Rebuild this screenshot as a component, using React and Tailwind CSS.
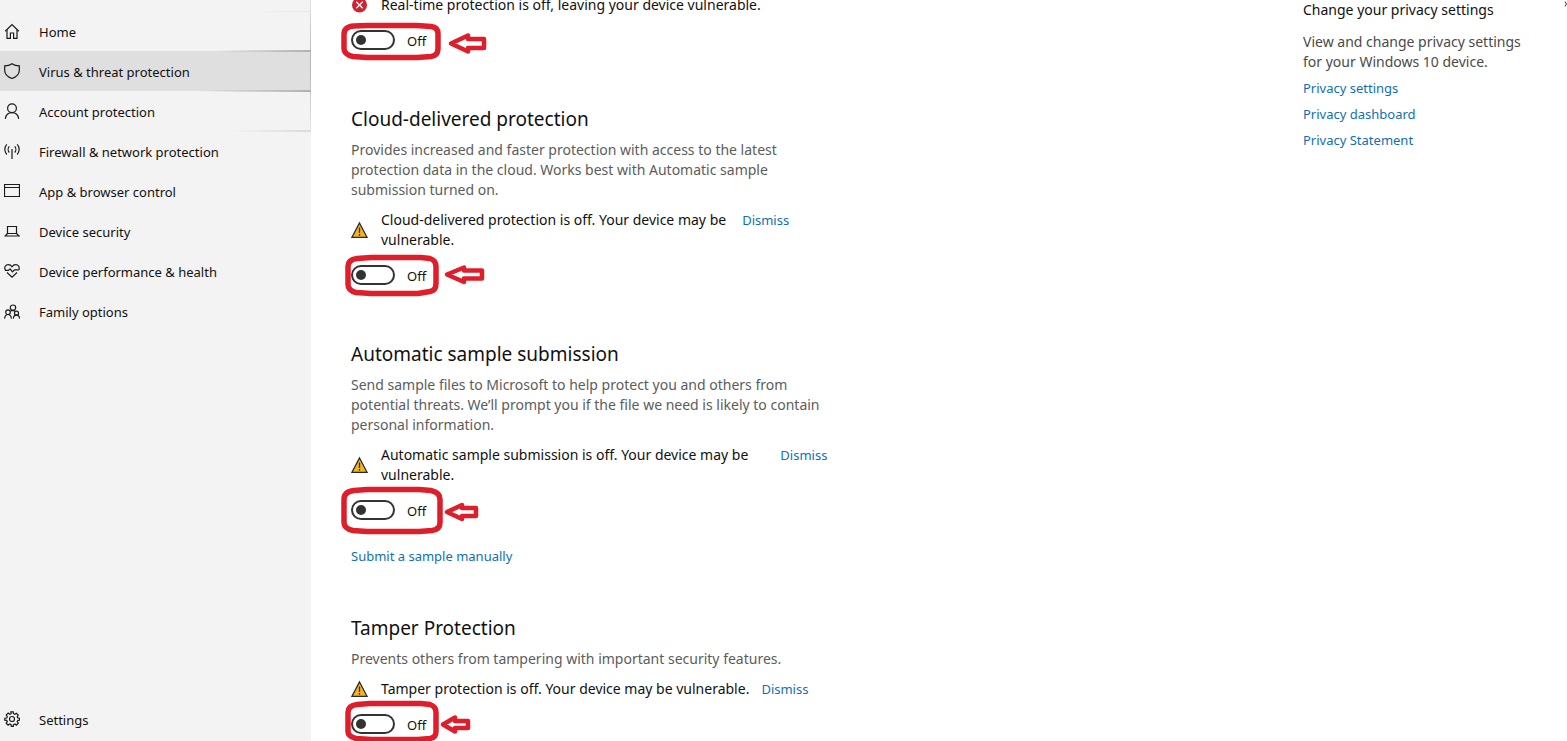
import { useState } from 'react'

const icons = {
  home: (
    <>
      <path d="M1.2 8.2 8 1.600l6.800 6.600" />
      <path d="M3 7v8.400h3.400V10h3.200v5.400H13V7" />
    </>
  ),
  shield: <path d="M8 .7C6 2.100 3.500 2.800.7 2.900v4.600c0 3.800 3 6.400 7.300 8 4.300-1.600 7.300-4.200 7.300-8V2.900C12.500 2.800 10 2.100 8 .7Z" />,
  person: (
    <>
      <circle cx="8" cy="5.200" r="4.400" />
      <path d="M1.300 15.800c.5-3.800 3.200-6.200 6.700-6.200s6.200 2.400 6.700 6.200" />
    </>
  ),
  network: (
    <>
      <path d="M8 6v10" />
      <path d="M5.300 3.300c-1.500 1.700-1.500 4.500 0 6.200M10.700 3.300c1.500 1.700 1.500 4.500 0 6.200" />
      <path d="M2.800 1.300c-2.600 2.900-2.600 7.300 0 10.200M13.200 1.300c2.600 2.900 2.600 7.300 0 10.200" />
    </>
  ),
  browser: <path d="M.5 1.500h15v12H.5zM.5 4.500h15" />,
  laptop: (
    <>
      <path d="M3.500 3.500h9v7h-9z" />
      <path d="M3.500 10.500 1.200 13h14l-2.700-2.500" />
    </>
  ),
  heart: (
    <>
      <path d="M1.400 7.200C-.2 4.300 1.600 1.600 4.300 1.600c1.700 0 2.900.9 3.700 2.200.8-1.300 2-2.200 3.700-2.200 2.700 0 4.500 2.700 2.900 5.600" />
      <path d="M1 7.300h3.500l1.500-1.500 2.500 3 2.100-2h4M3 9.500l5 4.600 5-4.600" />
    </>
  ),
  family: (
    <>
      <circle cx="9" cy="4.700" r="2.700" />
      <circle cx="4" cy="9.200" r="2.300" />
      <circle cx="12.500" cy="10.200" r="2" />
      <path d="M.6 15.600c.2-2.500 1.500-4.100 3.400-4.100s3.200 1.600 3.400 4.100M9.300 15.600c.2-2.100 1.400-3.400 3.200-3.400s2.900 1.300 3.100 3.400M6.500 7.900l2-.5c1.500 0 2.300.4 2.900 1.200" />
    </>
  ),
  gear: (
    <>
      <circle cx="8" cy="8" r="2.500" />
      <path d="m6.800.8.300 1.900-1.400.6L4.200 2.100 2.200 4.100l1.100 1.600-.6 1.300L.8 7.200v2l1.900.2.600 1.300-1.100 1.500 1.900 1.900 1.600-1.100 1.400.6.200 1.800h2l.2-1.800 1.400-.6 1.500 1.100 1.900-1.900-1.100-1.500.6-1.300 1.800-.2v-2l-1.800-.3-.6-1.300 1.100-1.500-2-1.900-1.400 1.100-1.400-.6L9.200.8Z" />
    </>
  ),
}

const navItems = [
  { label: 'Home', icon: 'home' },
  { label: 'Virus & threat protection', icon: 'shield' },
  { label: 'Account protection', icon: 'person' },
  { label: 'Firewall & network protection', icon: 'network' },
  { label: 'App & browser control', icon: 'browser' },
  { label: 'Device security', icon: 'laptop' },
  { label: 'Device performance & health', icon: 'heart' },
  { label: 'Family options', icon: 'family' },
]

// box and arrow outlines drawn round each switch
const marks = {
  realtime: {
    box: 'M17 13 30 12.500h50l14 1q7 1 7 7v15q0 7-7 8l-14 1H30l-14-1q-9-2-9-8v-14q0-8 10-8.500Z',
    arrow: 'M114 30.500 131 22.500v3.500h16v9h-16V38.500Z',
  },
  cloud: {
    box: 'M20 10.500 34 9.500h50l9 1q6 2 6 8v17q0 7-6 8l-12 2H34l-15-1q-8-2-8-8v-18q0-7 9-8Z',
    arrow: 'M110 26.500 127 19.500v3h18v8h-18v3.500Z',
  },
  sample: {
    box: 'M17 7.500 30 6.500h52l12 1q9 2 9 9v23q0 7-8 8l-13 1H30l-14-1q-9-2-9-8v-23q0-8 10-9Z',
    arrow: 'M110 29 125 22v3h14v8h-14v3Z',
  },
  tamper: {
    box: 'M20 7.500 33 6.500h51l9 1q6 2 6 8v19q0 6-6 7l-12 1H34l-15-1q-8-2-8-7v-19q0-7 9-8Z',
    arrow: 'M106 27.500 118 20.500v3.500h13v7h-13v3.500Z',
  },
}

function NavItem({ label, icon, active }) {
  return (
    <a
      href="#"
      aria-current={active ? 'page' : undefined}
      className={`flex h-10 items-center pl-1 text-[13px] leading-5 text-[#111] ${active ? 'bg-[#dfdfdf]' : ''}`}
    >
      <svg viewBox="0 0 16 16" className="mr-[19px] size-4 shrink-0" fill="none" stroke="#1a1a1a" strokeWidth="1.200" aria-hidden="true">
        {icons[icon]}
      </svg>
      <span className="pt-[2px]">{label}</span>
    </a>
  )
}

function Sidebar() {
  return (
    <aside className="relative flex w-[311px] shrink-0 flex-col justify-between bg-[#f3f3f3] pt-[11px] pb-[2px]">
      <nav>
        {navItems.map((item) => (
          <NavItem key={item.label} {...item} active={item.icon === 'shield'} />
        ))}
      </nav>
      <NavItem label="Settings" icon="gear" />
      {/* hover reveal light on the right edge */}
      <div className="absolute top-0 right-0 h-[131px] w-px bg-linear-to-b from-[#e2e2e2] via-[#b4b4b4] to-[#e8e8e8]" />
      <div className="absolute top-[11px] right-0 h-px w-16 bg-linear-to-l from-[#e6e6e6] to-transparent" />
      <div className="absolute top-[50px] right-0 h-[2px] w-24 bg-linear-to-l from-[#b0b0b0] to-transparent" />
      <div className="absolute top-[90px] right-0 h-[2px] w-28 bg-linear-to-l from-[#b0b0b0] to-transparent" />
      <div className="absolute top-[130px] right-0 h-[2px] w-20 bg-linear-to-l from-[#dadada] to-transparent" />
    </aside>
  )
}

function WarningIcon() {
  return (
    <svg viewBox="0 0 18 18" className="size-[18px] shrink-0" aria-hidden="true">
      <path d="M8.500 2 16 16.300H1Z" fill="#f2b51d" stroke="#2b2b2b" strokeWidth="1.300" />
      <path d="M8.500 6.500v5.500M8.500 13v1.800" stroke="#2b2b2b" strokeWidth="1.300" />
    </svg>
  )
}

function ErrorIcon() {
  return (
    <svg viewBox="0 0 18 18" className="size-[18px] shrink-0" aria-hidden="true">
      <circle cx="8.500" cy="9" r="7.500" fill="#d0222f" />
      <path d="m5.300 5.800 6.400 6.400M11.700 5.800l-6.400 6.400" stroke="#fff" strokeWidth="1.300" />
    </svg>
  )
}

function Toggle({ id, name }) {
  const [on, setOn] = useState(false)
  const mark = marks[id]

  return (
    <div className="relative mt-[15px] flex h-5 items-center gap-3">
      <input
        id={id}
        type="checkbox"
        role="switch"
        aria-label={name}
        checked={on}
        onChange={(e) => setOn(e.target.checked)}
        className="flex h-5 w-11 appearance-none items-center rounded-full border-2 border-[#333] bg-white px-[3px] before:size-[10px] before:rounded-full before:bg-[#333] checked:justify-end"
      />
      <label htmlFor={id} className="pt-[2px] text-[13px] leading-5 text-[#111]">
        {on ? 'On' : 'Off'}
      </label>
      <svg
        viewBox="0 0 154 60"
        className="pointer-events-none absolute -top-[17px] -left-[14px] h-[60px] w-[154px]"
        fill="none"
        stroke="#de1f2b"
        strokeLinejoin="round"
        aria-hidden="true"
      >
        <path d={mark.box} strokeWidth="5.500" />
        <path d={mark.arrow} strokeWidth="4.500" />
      </svg>
    </div>
  )
}

function Message({ icon, text, gap = 'gap-3', dismiss = true }) {
  return (
    <div className={`flex ${gap}`}>
      <div className="flex items-center gap-3">
        {icon}
        <p className="text-[14px] leading-5 whitespace-pre-line text-[#111]">{text}</p>
      </div>
      {dismiss && (
        <button type="button" className="h-5 text-[13px] leading-5 text-[#0f6fb4]">
          Dismiss
        </button>
      )}
    </div>
  )
}

function Section({ title, description, className, children }) {
  return (
    <section className={className}>
      <h2 className="text-[19px] leading-7 text-[#111]">{title}</h2>
      <p className="mt-[7px] mb-[10px] text-[14px] leading-5 whitespace-pre-line text-[#5c5c5c]">{description}</p>
      {children}
    </section>
  )
}

function PrivacyPanel() {
  return (
    <div className="relative w-[264px] shrink-0">
      <h3 className="text-[14px] leading-5 text-[#111]">Change your privacy settings</h3>
      <p className="mt-3 text-[14px] leading-5 whitespace-pre-line text-[#4a4a4a]">
        {'View and change privacy settings\nfor your Windows 10 device.'}
      </p>
      <div className="mt-[6px] flex flex-col items-start gap-[6px] text-[13px] leading-5 text-[#0f6fb4]">
        <a href="#">Privacy settings</a>
        <a href="#">Privacy dashboard</a>
        <a href="#">Privacy Statement</a>
      </div>
      <svg viewBox="0 0 3 6" className="absolute top-[1px] right-0 h-[6px] w-[3px]" fill="none" stroke="#333" aria-hidden="true">
        <path d="M1 .5 2.500 3 1 5.500" />
      </svg>
    </div>
  )
}

function App() {
  return (
    <div className="flex h-screen overflow-hidden bg-white font-['Noto_Sans','Open_Sans',sans-serif]">
      <Sidebar />
      <main className="flex flex-1 justify-between pl-10">
        <div className="-mt-[5px] whitespace-nowrap">
          <Message
            icon={<ErrorIcon />}
            text="Real-time protection is off, leaving your device vulnerable."
            dismiss={false}
          />
          <Toggle id="realtime" name="Real-time protection" />

          <Section
            title="Cloud-delivered protection"
            description={'Provides increased and faster protection with access to the latest\nprotection data in the cloud. Works best with Automatic sample\nsubmission turned on.'}
            className="mt-[55px]"
          >
            <Message
              icon={<WarningIcon />}
              text={'Cloud-delivered protection is off. Your device may be\nvulnerable.'}
              gap="gap-4"
            />
            <Toggle id="cloud" name="Cloud-delivered protection" />
          </Section>

          <Section
            title="Automatic sample submission"
            description={'Send sample files to Microsoft to help protect you and others from\npotential threats. We’ll prompt you if the file we need is likely to contain\npersonal information.'}
            className="mt-[55px]"
          >
            <Message
              icon={<WarningIcon />}
              text={'Automatic sample submission is off. Your device may be\nvulnerable.'}
              gap="gap-8"
            />
            <Toggle id="sample" name="Automatic sample submission" />
            <a href="#" className="mt-[26px] block w-fit text-[13px] leading-5 text-[#0f6fb4]">
              Submit a sample manually
            </a>
          </Section>

          <Section
            title="Tamper Protection"
            description="Prevents others from tampering with important security features."
            className="mt-12"
          >
            <Message icon={<WarningIcon />} text="Tamper protection is off. Your device may be vulnerable." />
            <Toggle id="tamper" name="Tamper Protection" />
          </Section>
        </div>
        <PrivacyPanel />
      </main>
    </div>
  )
}

export default App
